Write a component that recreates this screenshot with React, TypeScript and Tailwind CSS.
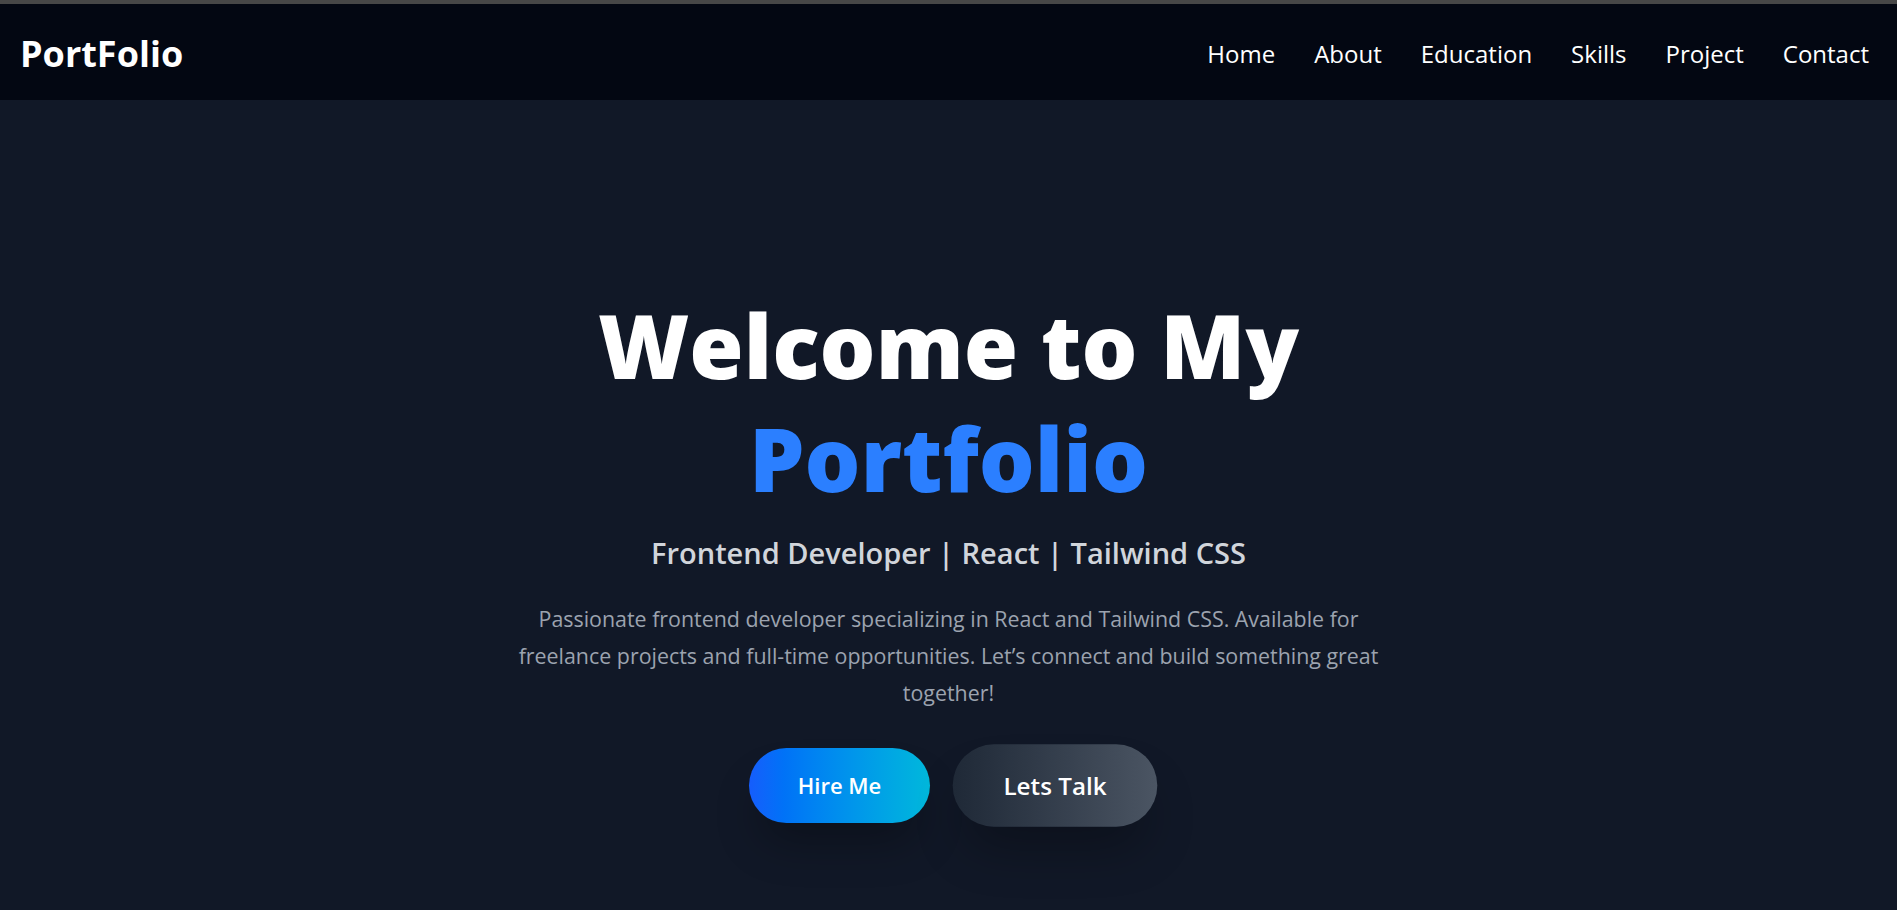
import React from 'react';

const links = ['Home', 'About', 'Education', 'Skills', 'Project', 'Contact'];

const Navbar = () => {
  return (
    <nav className="h-24 bg-[#030712] flex items-center justify-between pl-5 pr-7 pt-1">
      <h1 className="text-4xl font-bold text-white">PortFolio</h1>
      <ul className="flex items-center gap-[39px]">
        {links.map((link) => (
          <li key={link}>
            <a href={`#${link.toLowerCase()}`} className="text-2xl text-white">
              {link}
            </a>
          </li>
        ))}
      </ul>
    </nav>
  );
};

const Hero = () => {
  return (
    <section id="home" className="flex flex-col items-center text-center pt-[189px] pb-20">
      <h2 className="text-[88px] leading-[113px] font-black text-white">
        Welcome to My
        <span className="block text-[#2b7fff]">Portfolio</span>
      </h2>
      <p className="mt-5 text-[29px] leading-9 font-semibold text-[#d1d5db]">
        Frontend Developer | React | Tailwind CSS
      </p>
      <p className="mt-[29px] max-w-[870px] text-[21.4px] leading-[37px] text-[#9ca3af]">
        Passionate frontend developer specializing in React and Tailwind CSS. Available for freelance projects and
        full-time opportunities. Let’s connect and build something great together!
      </p>
      <div className="mt-[37px] flex items-center gap-8">
        <button className="w-[181px] h-[75px] rounded-full bg-gradient-to-r from-[#155dfc] to-[#00b8db] text-white text-[22px] font-semibold shadow-[0_28px_45px_-10px_rgba(0,0,0,0.3)]">
          Hire Me
        </button>
        <button className="w-[186px] h-[75px] rounded-full bg-gradient-to-r from-[#1f2937] to-[#4b5563] text-white text-[22px] font-semibold scale-110 shadow-[0_28px_45px_-10px_rgba(0,0,0,0.3)]">
          Lets Talk
        </button>
      </div>
    </section>
  );
};

export default function App() {
  return (
    <div className="min-h-screen bg-[#111827] font-['Open_Sans',sans-serif]">
      <div className="h-1 bg-[#474747]" />
      <Navbar />
      <Hero />
    </div>
  );
}
